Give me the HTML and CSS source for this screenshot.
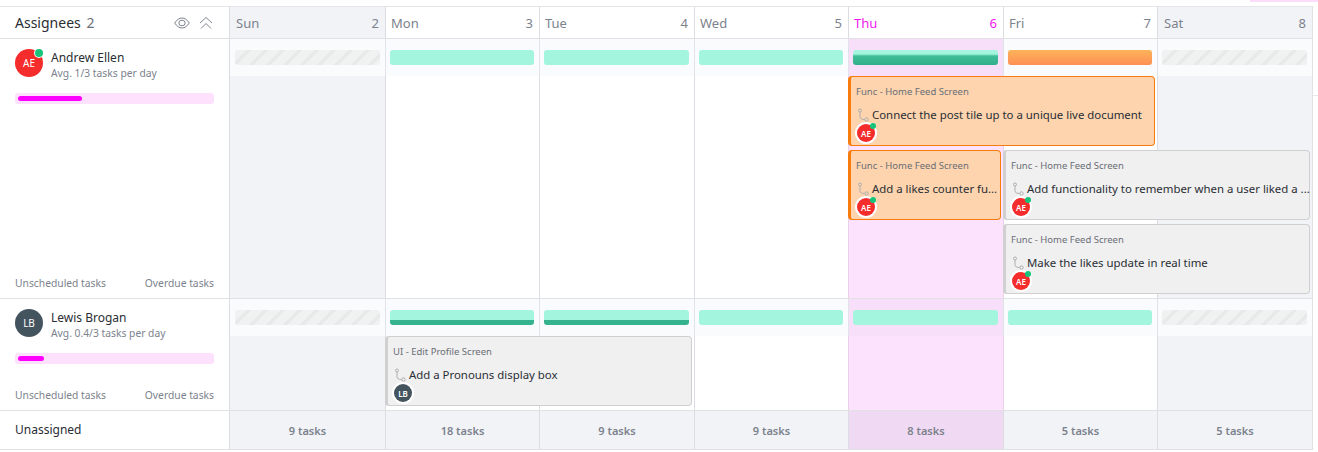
FILE: index.html
```html
<!DOCTYPE html>
<html lang="en">
<head>
  <meta charset="UTF-8">
  <title>Assignees</title>
  <link rel="stylesheet" href="styles.css">
</head>
<body>

<div class="top-tab"></div>
<div class="edge-tick"></div>

<div class="board">
  <div class="row head-row">
    <div class="side head-side">
      <span class="head-title">Assignees <b>2</b></span>
      <svg class="head-icon" width="16" height="12" viewBox="0 0 16 12"><path d="M.7 6C3 2.600 5.300 1 8 1s5 1.600 7.300 5C13 9.400 10.700 11 8 11S3 9.400.7 6z"/><ellipse cx="8" cy="6" rx="3.200" ry="2.800"/></svg>
      <svg class="head-icon" width="14" height="14" viewBox="0 0 14 14"><path d="M1 7l6-5.500L13 7M2 12.500L7 7.500l5 5"/></svg>
    </div>
    <div class="day-head off"><span>Sun</span><span>2</span></div>
    <div class="day-head"><span>Mon</span><span>3</span></div>
    <div class="day-head"><span>Tue</span><span>4</span></div>
    <div class="day-head"><span>Wed</span><span>5</span></div>
    <div class="day-head today"><span>Thu</span><span>6</span></div>
    <div class="day-head"><span>Fri</span><span>7</span></div>
    <div class="day-head off"><span>Sat</span><span>8</span></div>
  </div>

  <div class="row person-row andrew">
    <div class="side person">
      <div class="person-top">
        <div class="avatar red online">AE</div>
        <div>
          <div class="name">Andrew Ellen</div>
          <div class="avg">Avg. 1/3 tasks per day</div>
        </div>
      </div>
      <div class="load"><div class="load-fill" style="width: 33%"></div></div>
      <div class="side-links"><span>Unscheduled tasks</span><span>Overdue tasks</span></div>
    </div>

    <div class="col off c1"></div>
    <div class="col c2"></div>
    <div class="col c3"></div>
    <div class="col c4"></div>
    <div class="col today c5"></div>
    <div class="col c6"></div>
    <div class="col off c7"></div>

    <div class="band c1"><div class="bar empty"></div></div>
    <div class="band c2"><div class="bar mint"></div></div>
    <div class="band c3"><div class="bar mint"></div></div>
    <div class="band c4"><div class="bar mint"></div></div>
    <div class="band today c5"><div class="bar mint-half"></div></div>
    <div class="band c6"><div class="bar orange"></div></div>
    <div class="band c7"><div class="bar empty"></div></div>

    <div class="card active a1">
      <div class="card-group">Func - Home Feed Screen</div>
      <div class="card-title"><svg class="sub" width="12" height="14" viewBox="0 0 12 14"><path d="M3 4v4.500C3 10.800 4.500 11.500 7.500 11.500"/><circle cx="3" cy="2.500" r="1.500"/><circle cx="9.500" cy="11.500" r="1.700"/></svg><span>Connect the post tile up to a unique live document</span></div>
      <div class="avatar small red online">AE</div>
    </div>
    <div class="card active a2">
      <div class="card-group">Func - Home Feed Screen</div>
      <div class="card-title"><svg class="sub" width="12" height="14" viewBox="0 0 12 14"><path d="M3 4v4.500C3 10.800 4.500 11.500 7.500 11.500"/><circle cx="3" cy="2.500" r="1.500"/><circle cx="9.500" cy="11.500" r="1.700"/></svg><span>Add a likes counter fu...</span></div>
      <div class="avatar small red online">AE</div>
    </div>
    <div class="card a3">
      <div class="card-group">Func - Home Feed Screen</div>
      <div class="card-title"><svg class="sub" width="12" height="14" viewBox="0 0 12 14"><path d="M3 4v4.500C3 10.800 4.500 11.500 7.500 11.500"/><circle cx="3" cy="2.500" r="1.500"/><circle cx="9.500" cy="11.500" r="1.700"/></svg><span>Add functionality to remember when a user liked a ...</span></div>
      <div class="avatar small red online">AE</div>
    </div>
    <div class="card a4">
      <div class="card-group">Func - Home Feed Screen</div>
      <div class="card-title"><svg class="sub" width="12" height="14" viewBox="0 0 12 14"><path d="M3 4v4.500C3 10.800 4.500 11.500 7.500 11.500"/><circle cx="3" cy="2.500" r="1.500"/><circle cx="9.500" cy="11.500" r="1.700"/></svg><span>Make the likes update in real time</span></div>
      <div class="avatar small red online">AE</div>
    </div>
  </div>

  <div class="row person-row lewis">
    <div class="side person">
      <div class="person-top">
        <div class="avatar slate">LB</div>
        <div>
          <div class="name">Lewis Brogan</div>
          <div class="avg">Avg. 0.4/3 tasks per day</div>
        </div>
      </div>
      <div class="load"><div class="load-fill" style="width: 13.500%"></div></div>
      <div class="side-links"><span>Unscheduled tasks</span><span>Overdue tasks</span></div>
    </div>

    <div class="col off c1"></div>
    <div class="col c2"></div>
    <div class="col c3"></div>
    <div class="col c4"></div>
    <div class="col today c5"></div>
    <div class="col c6"></div>
    <div class="col off c7"></div>

    <div class="band c1"><div class="bar empty"></div></div>
    <div class="band c2"><div class="bar mint-low"></div></div>
    <div class="band c3"><div class="bar mint-low"></div></div>
    <div class="band c4"><div class="bar mint"></div></div>
    <div class="band today c5"><div class="bar mint"></div></div>
    <div class="band c6"><div class="bar mint"></div></div>
    <div class="band c7"><div class="bar empty"></div></div>

    <div class="card b1">
      <div class="card-group">UI - Edit Profile Screen</div>
      <div class="card-title"><svg class="sub" width="12" height="14" viewBox="0 0 12 14"><path d="M3 4v4.500C3 10.800 4.500 11.500 7.500 11.500"/><circle cx="3" cy="2.500" r="1.500"/><circle cx="9.500" cy="11.500" r="1.700"/></svg><span>Add a Pronouns display box</span></div>
      <div class="avatar small slate">LB</div>
    </div>
  </div>

  <div class="row foot-row">
    <div class="side foot-side">Unassigned</div>
    <div class="foot-cell">9 tasks</div>
    <div class="foot-cell">18 tasks</div>
    <div class="foot-cell">9 tasks</div>
    <div class="foot-cell">9 tasks</div>
    <div class="foot-cell today">8 tasks</div>
    <div class="foot-cell">5 tasks</div>
    <div class="foot-cell">5 tasks</div>
  </div>
</div>

</body>
</html>
```

FILE: styles.css
```css
* {
  box-sizing: border-box;
}
html, body {
  height: 100%;
}
body {
  margin: 0;
  overflow: hidden;
  background: #fff;
  font-family: "Noto Sans", "Open Sans", sans-serif;
  color: #2a2e34;
  position: relative;
}
.top-tab {
  position: absolute;
  top: 0;
  right: 0;
  width: 68px;
  height: 2px;
  background: #fbdcfb;
}
.edge-tick {
  position: absolute;
  top: 95px;
  right: 0;
  width: 5px;
  height: 1px;
  background: #e8e9ec;
}
.board {
  width: 1313px;
  margin-top: 6px;
  border-top: 1px solid #e4e5e9;
  border-right: 1px solid #e0e1e5;
}
.row {
  display: grid;
  grid-template-columns: 230px 156px 154px 155px 154px 155px 154px 154px;
  border-bottom: 1px solid #e0e1e5;
}
.side {
  border-right: 1px solid #dcdde2;
  background: #fff;
}

/* header */
.head-row {
  height: 32px;
}
.head-side {
  display: flex;
  align-items: center;
  padding: 0 16px 0 15px;
  gap: 9px;
}
.head-title {
  flex: 1;
  font-size: 14px;
  color: #2a2e34;
}
.head-title b {
  font-weight: 400;
  margin-left: 2px;
  color: #6b6f7b;
}
.head-icon {
  fill: none;
  stroke: #80848f;
  stroke-width: 1;
}
.day-head {
  display: flex;
  justify-content: space-between;
  align-items: center;
  padding: 0 6px 0 5px;
  font-size: 13px;
  color: #7c828d;
  border-right: 1px solid #dcdde2;
}
.day-head:last-child, .foot-cell:last-child, .col.c7 {
  border-right: none;
}
.day-head.off {
  background: #f1f3f7;
  padding-left: 6px;
}
.day-head.today {
  color: #f018f0;
}

/* rows */
.person-row {
  grid-template-rows: 37px repeat(3, 74px);
}
.andrew {
  height: 260px;
}
.lewis {
  grid-template-rows: 37px 74px;
  height: 112px;
}
.person {
  grid-column: 1;
  grid-row: 1 / -1;
  display: flex;
  flex-direction: column;
  padding: 10px 15px 0;
}
.person-top {
  display: flex;
  gap: 8px;
}
.avatar {
  flex: none;
  width: 28px;
  height: 28px;
  border-radius: 50%;
  display: flex;
  align-items: center;
  justify-content: center;
  color: #fff;
  font-size: 10px;
  position: relative;
}
.avatar.red {
  background: #f42c2c;
}
.avatar.slate {
  background: #44545f;
}
.avatar.online::after {
  content: "";
  position: absolute;
  top: 0;
  right: 0;
  width: 8px;
  height: 8px;
  border-radius: 50%;
  background: #17c37b;
  box-shadow: 0 0 0 1px #fff;
}
.name {
  font-size: 12px;
  line-height: 16px;
  margin-top: 1px;
}
.avg {
  font-size: 10.300px;
  line-height: 14px;
  color: #7c828d;
}
.load {
  margin-top: 13px;
  height: 11px;
  padding: 3px;
  background: #fde1fd;
  border-radius: 3px;
}
.load-fill {
  height: 5px;
  border-radius: 3px;
  background: #ff00ff;
}
.side-links {
  margin-top: auto;
  height: 22px;
  display: flex;
  justify-content: space-between;
  font-size: 10.300px;
  line-height: 14px;
  color: #7c828d;
}

/* day columns */
.col {
  grid-row: 1 / -1;
  background: #fff;
  border-right: 1px solid #dcdde2;
}
.col.off {
  background: #f1f3f7;
}
.col.today {
  background: #fce2fc;
  border-left: 1px solid #e8d2e8;
  margin-left: -1px;
  border-right-color: #e8d2e8;
}
.band {
  grid-row: 1;
  padding: 11px 5px 0 4px;
  background: #fafbfd;
  border-right: 1px solid #e2e3e8;
}
.band.c1 {
  padding-left: 5px;
}
.band.c7 {
  border-right: none;
}
.band.today {
  background: #f8dff9;
}
.bar {
  height: 15px;
  border-radius: 3px;
}
.bar.mint {
  background: #a3f5dd;
}
.bar.mint-half {
  background: linear-gradient(#a3f5dd 0, #a3f5dd 4px, #3fbd97 6px, #2faf8a 100%);
}
.bar.mint-low {
  background: linear-gradient(#a3f5dd 0, #a3f5dd 10px, #35b28e 10px);
}
.bar.orange {
  background: linear-gradient(#fcb459, #ff8f55);
}
.bar.empty {
  background: repeating-linear-gradient(135deg, #f0f2f2 0, #f0f2f2 8px, #e8eaea 8px, #e8eaea 12px);
}
.c1 { grid-column: 2; }
.c2 { grid-column: 3; }
.c3 { grid-column: 4; }
.c4 { grid-column: 5; }
.c5 { grid-column: 6; }
.c6 { grid-column: 7; }
.c7 { grid-column: 8; }

/* task cards */
.card {
  z-index: 1;
  height: 70px;
  margin: 0 3px 0 -1px;
  padding: 8px 4px 0 5px;
  background: #f0f0f0;
  border: 1px solid #d0d0d0;
  border-left-width: 3px;
  border-radius: 4px;
  min-width: 0;
}
.card.active {
  background: #fdd4ae;
  border-color: #f77c0c;
}
.a1 {
  grid-column: 6 / 8;
  grid-row: 2;
}
.a2 {
  grid-column: 6;
  grid-row: 3;
}
.a3 {
  grid-column: 7 / 9;
  grid-row: 3;
  margin-right: 2px;
}
.a4 {
  grid-column: 7 / 9;
  grid-row: 4;
  margin-right: 2px;
}
.b1 {
  grid-column: 3 / 5;
  grid-row: 2;
}
.card-group {
  font-size: 9.500px;
  line-height: 14px;
  color: #6a6e76;
  white-space: nowrap;
}
.card-title {
  display: flex;
  align-items: center;
  gap: 3px;
  margin-top: 8px;
  margin-left: 1px;
  height: 15px;
  font-size: 11.400px;
  line-height: 15px;
  color: #2a2e34;
  white-space: nowrap;
}
.sub {
  flex: none;
  fill: none;
  stroke: #aeaeae;
  stroke-width: 1;
}
.avatar.small {
  width: 18px;
  height: 18px;
  font-size: 8px;
  font-weight: 600;
  box-shadow: 0 0 0 2px #fff;
  margin: 2px 0 0 1px;
}
.avatar.small.online::after {
  top: -1px;
  right: -1px;
  width: 6px;
  height: 6px;
  box-shadow: none;
}

/* footer */
.foot-row {
  height: 39px;
}
.foot-side {
  display: flex;
  align-items: center;
  padding: 0 15px 2px;
  font-size: 12px;
}
.foot-cell {
  display: flex;
  align-items: center;
  justify-content: center;
  background: #f1f3f7;
  border-right: 1px solid #dcdde2;
  font-size: 11px;
  font-weight: 600;
  color: #7c828d;
}
.foot-cell.today {
  background: #f0d9f2;
}
```
